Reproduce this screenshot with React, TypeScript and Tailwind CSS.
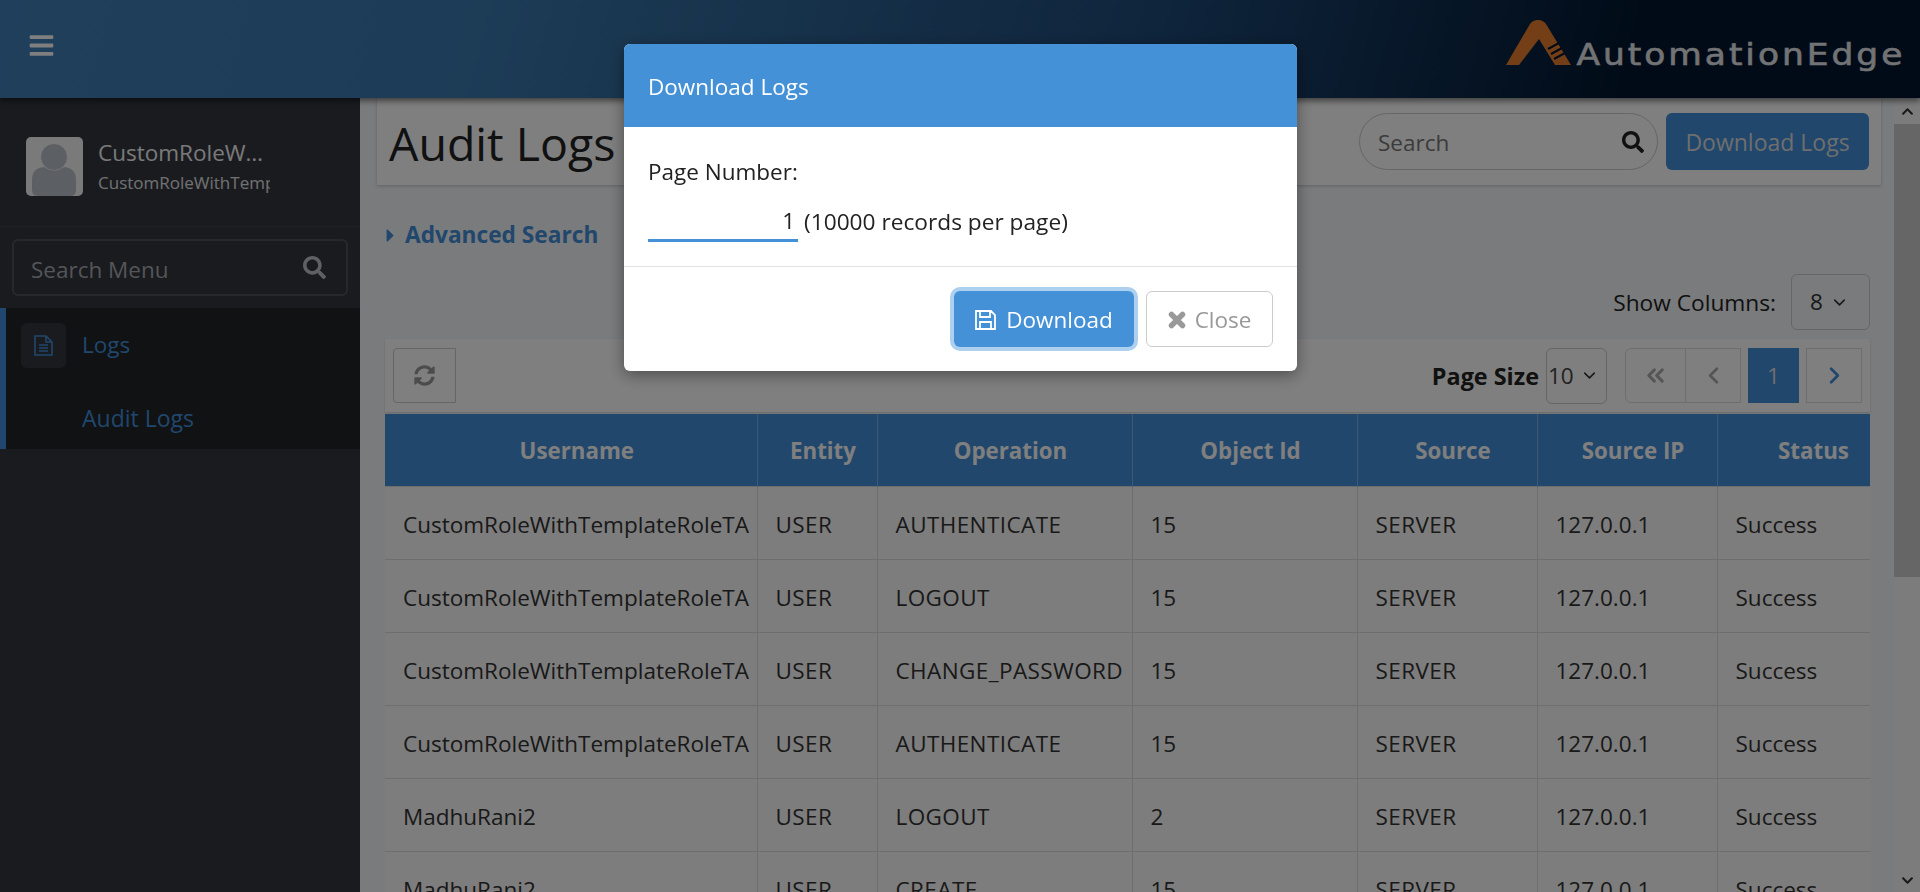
import { FaBars, FaCaretRight, FaChevronDown, FaChevronUp, FaSearch, FaSyncAlt } from 'react-icons/fa'
import { LuChevronDown, LuChevronLeft, LuChevronRight, LuChevronsLeft } from 'react-icons/lu'

const rows = [
  ['CustomRoleWithTemplateRoleTA', 'USER', 'AUTHENTICATE', '15', 'SERVER', '127.0.0.1', 'Success'],
  ['CustomRoleWithTemplateRoleTA', 'USER', 'LOGOUT', '15', 'SERVER', '127.0.0.1', 'Success'],
  ['CustomRoleWithTemplateRoleTA', 'USER', 'CHANGE_PASSWORD', '15', 'SERVER', '127.0.0.1', 'Success'],
  ['CustomRoleWithTemplateRoleTA', 'USER', 'AUTHENTICATE', '15', 'SERVER', '127.0.0.1', 'Success'],
  ['MadhuRani2', 'USER', 'LOGOUT', '2', 'SERVER', '127.0.0.1', 'Success'],
  ['MadhuRani2', 'USER', 'CREATE', '15', 'SERVER', '127.0.0.1', 'Success'],
]

const columns = ['Username', 'Entity', 'Operation', 'Object Id', 'Source', 'Source IP', 'Status']

// upper-case columns run a little wider in the reference
const cellTracking = ['', 'tracking-[0.4px]', 'tracking-[0.4px]', '', 'tracking-[0.4px]', '', '']

function Logo() {
  return (
    <div className="flex items-start gap-[38px] mr-[15px]">
      <svg width="65" height="45" viewBox="0 0 65 45" className="shrink-0">
        <path d="M0 45 L24 4 Q27 0 32 0 Q37 0 40 4 L65 45 L49 45 L33 19 L13 45 Z" fill="#e87f2f" />
        <path d="M42 29 L53 23 M45 34 L56 28 M48 39 L59 33" stroke="#02162f" strokeWidth="2" />
      </svg>
      <span className="text-[31px] leading-none tracking-[2.7px] text-[#e4e6e8] mt-[19px] scale-x-[1.11] origin-right [-webkit-text-stroke:0.6px_#e4e6e8] font-['DejaVu_Sans',sans-serif]">
        AutomationEdge
      </span>
    </div>
  )
}

function Avatar() {
  return (
    <div className="w-[57px] h-[59px] rounded-[5px] bg-[#f4f4f4] overflow-hidden shrink-0">
      <svg viewBox="0 0 57 59" className="w-full h-full">
        <circle cx="28" cy="20" r="13.5" fill="#b8bec8" stroke="#fff" strokeWidth="0.8" />
        <path d="M6 53 V43 Q6 31 18 30 Q28 37 38 30 Q50 31 50 43 V53 Q50 59 44 59 H12 Q6 59 6 53 Z" fill="#b8bec8" />
      </svg>
    </div>
  )
}

function FileIcon() {
  return (
    <svg width="19" height="21" viewBox="0 0 19 21" fill="none" stroke="#428ed9" strokeWidth="1.6">
      <path d="M1 1 H12 L18 7 V20 H1 Z M12 1 V7 H18 M5 10 H14 M5 13 H14 M5 16 H14" />
    </svg>
  )
}

function SaveIcon() {
  return (
    <svg width="21" height="20" viewBox="0 0 21 20" fill="none" stroke="#fff" strokeWidth="1.8">
      <path d="M1 1 H16 L20 5 V19 H1 Z M5 1 V7 H15 V1 M5 19 V12 H16 V19" />
    </svg>
  )
}

function CloseIcon() {
  return (
    <svg width="18" height="18" viewBox="0 0 18 18" stroke="#999" strokeWidth="5.5" strokeLinecap="round">
      <path d="M3.5 3.5 L14.5 14.5 M14.5 3.5 L3.5 14.5" />
    </svg>
  )
}

function Sidebar() {
  return (
    <aside className="w-[360px] shrink-0 bg-[#32363f] flex flex-col">
      <div className="h-[129px] flex items-center pl-[26px] pt-[9px] border-b border-[#3f434b]">
        <Avatar />
        <div className="ml-[15px] w-[172px]">
          <div className="text-[22.5px] leading-[30px] text-[#f2f2f2] truncate pr-[2px]">CustomRoleWithTemplateRoleTA</div>
          <div className="text-[17px] leading-[24px] text-[#e2e2e2] overflow-hidden whitespace-nowrap mt-[3px]">CustomRoleWithTemplateRoleTA</div>
        </div>
      </div>
      <div className="h-[81px] px-[12px] pt-[12px]">
        <div className="h-[57px] rounded-[6px] border-2 border-[#4c5058] flex items-center justify-between pl-[17px] pr-[20px]">
          <span className="text-[22.5px] text-[#a8abaf] pt-[5px]">Search Menu</span>
          <FaSearch className="text-[#bfc1c4] text-[23px]" />
        </div>
      </div>
      <div className="h-[141px] bg-[#202429] border-l-[6px] border-[#428ed9]">
        <div className="flex items-center pl-[15px] pt-[15px]">
          <div className="w-[45px] h-[45px] rounded-[6px] bg-[#32363f] flex items-center justify-center">
            <FileIcon />
          </div>
          <span className="ml-[16px] text-[22.5px] text-[#428ed9] mb-[2px]">Logs</span>
        </div>
        <div className="pl-[76px] mt-[35px] text-[23px] leading-[30px] text-[#428ed9]">Audit Logs</div>
      </div>
    </aside>
  )
}

function Toolbar() {
  return (
    <div className="ml-[25px] mr-[24px] mt-[9px] h-[73px] bg-[#fefefe] flex items-center justify-between pl-[8px] pr-[8px] shadow-[0_1px_2px_rgba(0,0,0,0.15)]">
      <div className="w-[63px] h-[55px] border border-[#ccc] rounded-l-[4px] flex items-center justify-center">
        <FaSyncAlt className="text-[#999] text-[21px]" />
      </div>
      <div className="flex items-center">
        <span className="text-[23.4px] font-bold text-[#222] mr-[7px] pt-[2px]">Page Size</span>
        <div className="w-[61px] h-[56px] border border-[#ccc] rounded-[6px] flex items-center justify-between pl-[1px] pr-[7px] text-[22.5px] text-[#444] mr-[18px]">
          10
          <LuChevronDown className="text-[#333] text-[19px]" />
        </div>
        <div className="w-[61px] h-[55px] border border-[#ddd] rounded-l-[6px] flex items-center justify-center">
          <LuChevronsLeft className="text-[#aaa] text-[27px]" strokeWidth={2.6} />
        </div>
        <div className="w-[55px] h-[55px] border border-l-0 border-[#ddd] flex items-center justify-center mr-[7px]">
          <LuChevronLeft className="text-[#aaa] text-[27px]" strokeWidth={2.4} />
        </div>
        <div className="w-[51px] h-[55px] bg-[#428ed9] text-[#ddd] text-[22.5px] flex items-center justify-center mr-[7px]">1</div>
        <div className="w-[56px] h-[55px] border border-[#ddd] flex items-center justify-center">
          <LuChevronRight className="text-[#428ed9] text-[27px]" strokeWidth={2.4} />
        </div>
      </div>
    </div>
  )
}

function LogsTable() {
  return (
    <div className="ml-[25px] mr-[24px] mt-[2px] overflow-hidden">
      <table className="table-fixed w-[1513px] border-collapse bg-[#fafafa] text-[22.5px] text-[#333]">
        <colgroup>
          <col className="w-[372px]" />
          <col className="w-[120px]" />
          <col className="w-[255px]" />
          <col className="w-[225px]" />
          <col className="w-[180px]" />
          <col className="w-[180px]" />
          <col className="w-[181px]" />
        </colgroup>
        <thead>
          <tr className="h-[72px] bg-[#428ed9]">
            {columns.map((c) => (
              <th key={c} className="pl-[12px] pt-[2px] text-[22.3px] font-bold text-[#fff] text-center border-x border-[#7fb0e0] first:border-l-0">{c}</th>
            ))}
          </tr>
        </thead>
        <tbody>
          {rows.map((r, i) => (
            <tr key={i} className="h-[73px]">
              {r.map((v, j) => (
                <td key={j} className={`pl-[18px] pt-[4px] whitespace-nowrap border border-[#ddd] first:border-l-0 ${cellTracking[j]}`}>{v}</td>
              ))}
            </tr>
          ))}
        </tbody>
      </table>
    </div>
  )
}

function DownloadModal() {
  return (
    <div className="fixed inset-0 z-20 bg-black/50">
      <div className="w-[673px] h-[327px] ml-[624px] mt-[44px] bg-white rounded-[6px] overflow-hidden text-[#222] shadow-[0_4px_16px_rgba(0,0,0,0.4)]">
        <div className="h-[83px] bg-[#4491d8] flex items-center pl-[24px] pt-[2px] text-[22.5px] text-white">Download Logs</div>
        <div className="h-[140px] pl-[24px] pt-[30px] border-b border-[#e2e2e2]">
          <div className="text-[22.5px] leading-[30px]">Page Number:</div>
          <div className="flex items-end mt-[18px]">
            <div className="w-[150px] h-[37px] border-b-[3px] border-[#4491d8] text-right pr-[3px] text-[22.5px] leading-[32px]">1</div>
            <span className="ml-[6px] text-[22.7px] leading-[30px] mb-[5px]">(10000 records per page)</span>
          </div>
        </div>
        <div className="flex justify-end items-start pt-[24px] pr-[24px] gap-[12px]">
          <button className="w-[180px] h-[56px] rounded-[6px] bg-[#4491d8] text-white text-[22.5px] pt-[2px] flex items-center justify-center gap-[10px] ring-4 ring-[#add0ef]">
            <SaveIcon />
            Download
          </button>
          <button className="w-[127px] h-[56px] rounded-[6px] border border-[#ccc] text-[#999] text-[22.5px] pt-[2px] flex items-center justify-center gap-[9px]">
            <CloseIcon />
            Close
          </button>
        </div>
      </div>
    </div>
  )
}

export default function App() {
  return (
    <div className="h-screen overflow-hidden flex flex-col font-['Open_Sans',sans-serif] bg-[#f4f6f8]">
      <header className="h-[98px] shrink-0 flex items-start justify-between bg-[linear-gradient(105deg,#3f7fb8_0%,#3a78ad_25%,#1e4a78_60%,#02162f_85%,#02162f_100%)] pt-[20px] shadow-[0_3px_6px_rgba(0,0,0,0.5)] relative z-10">
        <FaBars className="text-white text-[27px] ml-[28px] mt-[12px]" />
        <Logo />
      </header>
      <div className="flex flex-1 min-h-0">
        <Sidebar />
        <main className="flex-1 min-w-0 flex">
          <div className="flex-1 min-w-0">
            <div className="ml-[17px] mr-[13px] h-[87px] bg-[#fefefe] shadow-[0_1px_3px_rgba(0,0,0,0.2)] flex items-center justify-between pl-[12px] pr-[12px]">
              <h1 className="text-[46.5px] leading-none text-[#222] pt-[3px]">Audit Logs</h1>
              <div className="flex items-center gap-[8px]">
                <div className="w-[299px] h-[57px] rounded-full border border-[#ccc] flex items-center justify-between pl-[18px] pr-[13px]">
                  <span className="text-[22.5px] text-[#777] pt-[2px]">Search</span>
                  <FaSearch className="text-[#222] text-[22px]" />
                </div>
                <button className="w-[203px] h-[57px] rounded-[6px] bg-[#428ed9] text-[#ddd] text-[23px] pt-[2px]">Download Logs</button>
              </div>
            </div>
            <div className="ml-[20px] mt-[34px] h-[32px] flex items-center text-[#428ed9]">
              <FaCaretRight className="text-[21px]" />
              <span className="ml-[4px] text-[22.7px] font-bold">Advanced Search</span>
            </div>
            <div className="mt-[23px] mr-[24px] flex items-center justify-end">
              <span className="text-[22.7px] text-[#222] mr-[15px] pt-[3px]">Show Columns:</span>
              <div className="w-[79px] h-[56px] border border-[#ccc] rounded-[6px] flex items-center justify-between pl-[18px] pr-[20px] text-[22.5px] text-[#333]">
                8
                <LuChevronDown className="text-[#333] text-[19px]" />
              </div>
            </div>
            <Toolbar />
            <LogsTable />
          </div>
          <div className="w-[26px] shrink-0 bg-[#f8f8f8] flex flex-col">
            <div className="h-[26px] flex items-center justify-center">
              <FaChevronUp className="text-[#333] text-[13px]" />
            </div>
            <div className="h-[453px] bg-[#ccc]" />
            <div className="flex-1 flex items-end justify-center pb-[5px]">
              <FaChevronDown className="text-[#333] text-[13px]" />
            </div>
          </div>
        </main>
      </div>
      <DownloadModal />
    </div>
  )
}
